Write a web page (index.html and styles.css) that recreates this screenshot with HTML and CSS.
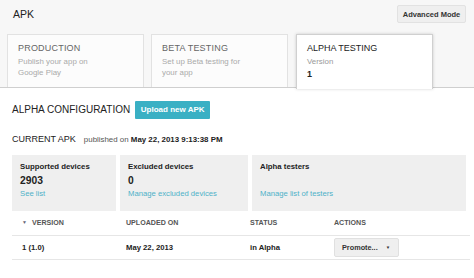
FILE: index.html
```html
<!DOCTYPE html>
<html lang="en">
<head>
    <meta charset="UTF-8">
    <title>APK</title>
    <link rel="stylesheet" href="styles.css">
</head>
<body>
    <div class="top">
        <div class="header">
            <h1>APK</h1>
            <button class="btn">Advanced Mode</button>
        </div>

        <!-- tracks -->
        <div class="tabs">
            <div class="tab">
                <h2>PRODUCTION</h2>
                <p>Publish your app on Google Play</p>
            </div>
            <div class="tab">
                <h2>BETA TESTING</h2>
                <p>Set up Beta testing for your app</p>
            </div>
            <div class="tab active">
                <h2>ALPHA TESTING</h2>
                <p>Version</p>
                <div class="version">1</div>
            </div>
        </div>
    </div>

    <div class="panel">
        <div class="config">
            <h3>ALPHA CONFIGURATION</h3>
            <button class="upload">Upload new APK</button>
        </div>

        <div class="current">
            <h3>CURRENT APK</h3>
            <span class="published">published on <b>May 22, 2013 9:13:38 PM</b></span>
        </div>

        <div class="stats">
            <div class="stat">
                <h4>Supported devices</h4>
                <div class="num">2903</div>
                <a href="#">See list</a>
            </div>
            <div class="stat">
                <h4>Excluded devices</h4>
                <div class="num">0</div>
                <a href="#">Manage excluded devices</a>
            </div>
            <div class="stat wide">
                <h4>Alpha testers</h4>
                <div class="num">&nbsp;</div>
                <a href="#">Manage list of testers</a>
            </div>
        </div>

        <table class="apks">
            <thead>
                <tr>
                    <th class="c-ver"><span class="arrow">&#9660;</span>VERSION</th>
                    <th class="c-up">UPLOADED ON</th>
                    <th class="c-st">STATUS</th>
                    <th>ACTIONS</th>
                </tr>
            </thead>
            <tbody>
                <tr>
                    <td class="c-ver">1 (1.0)</td>
                    <td>May 22, 2013</td>
                    <td>in Alpha</td>
                    <td><button class="promote">Promote... <span class="caret">&#9660;</span></button></td>
                </tr>
            </tbody>
        </table>
    </div>
</body>
</html>
```

FILE: styles.css
```css
* {
    box-sizing: border-box;
    margin: 0;
    padding: 0;
}

body {
    font-family: 'Liberation Sans', Arial, sans-serif;
    background: #fff;
    color: #222;
    width: 474px;
    overflow: hidden;
}

.top {
    background: #f7f7f7;
}

.header {
    display: flex;
    justify-content: space-between;
    align-items: flex-start;
    height: 34px;
    padding: 5px 8px 0 13px;
}

.header h1 {
    font-size: 10.5px;
    font-weight: normal;
    margin-top: 3px;
}

.btn {
    font-family: inherit;
    font-size: 7.5px;
    font-weight: bold;
    color: #333;
    background: #efefef;
    border: 1px solid #e2e2e2;
    border-radius: 2px;
    height: 18px;
    width: 69px;
    padding: 0;
}

/* tabs */
.tabs {
    display: flex;
    gap: 7px;
    padding-left: 7px;
    border-bottom: 1px solid #cfcfcf;
    height: 54px;
}

.tab {
    width: 137px;
    height: 53px;
    background: #fcfcfc;
    border: 1px solid #e2e2e2;
    border-bottom: none;
    padding: 8px 10px 0;
}

.tab h2 {
    font-size: 9px;
    font-weight: normal;
    color: #666;
    letter-spacing: 0.2px;
    line-height: 11px;
}

.tab p {
    font-size: 7.9px;
    color: #aaa;
    line-height: 11px;
    margin-top: 2px;
    width: 90px;
}

.tab.active {
    background: #fff;
    height: 55px;
    border-color: #d0d0d0;
    box-shadow: 0 0 3px rgba(0,0,0,0.18);
    position: relative;
    margin-left: 1px;
}

.tab.active h2 {
    color: #222;
    letter-spacing: 0;
}

.tab.active p {
    color: #999;
}

.version {
    font-size: 9px;
    font-weight: bold;
    margin-top: 2px;
}

/* panel */
.panel {
    padding: 0 8px 0 12px;
}

.config {
    display: flex;
    align-items: center;
    gap: 5px;
    height: 40px;
    padding-top: 3px;
}

.config h3 {
    font-size: 10px;
    font-weight: normal;
}

.current h3 {
    font-size: 9px;
    font-weight: normal;
}

.upload {
    font-family: inherit;
    font-size: 8px;
    font-weight: bold;
    color: #fff;
    background: #3ab0c4;
    border: none;
    border-radius: 1px;
    height: 18px;
    width: 75px;
    padding: 0;
}

.current {
    display: flex;
    align-items: baseline;
    gap: 8px;
    height: 27px;
    padding-top: 6px;
}

.published {
    font-size: 7.9px;
    color: #555;
}

.published b {
    color: #222;
}

.stats {
    display: flex;
    gap: 4px;
    height: 56px;
}

.stat {
    width: 104px;
    background: #efefef;
    padding: 7px 8px 0;
}

.stat:nth-child(2) {
    width: 128px;
}

.stat.wide {
    flex: 1;
}

.stat h4 {
    font-size: 7.8px;
    font-weight: bold;
    color: #222;
    line-height: 10px;
}

.stat .num {
    font-size: 10.3px;
    font-weight: bold;
    line-height: 14px;
    margin-top: 2px;
}

.stat a {
    display: block;
    font-size: 7.7px;
    line-height: 11px;
    color: #4eb1c8;
    text-decoration: none;
}

/* apk table */
.apks {
    width: 458px;
    border-collapse: collapse;
    font-size: 7.7px;
}

.apks th {
    text-align: left;
    font-size: 7.1px;
    font-weight: bold;
    color: #555;
    height: 24px;
    padding-top: 1px;
    border-bottom: 1px solid #e6e6e6;
}

.apks td {
    font-weight: bold;
    color: #222;
    height: 24px;
    border-bottom: 1px solid #e6e6e6;
}

.apks .c-ver {
    width: 114px;
    padding-left: 10px;
}

.apks .c-up {
    width: 124px;
}

.apks .c-st {
    width: 84px;
}

.arrow {
    font-size: 5px;
    color: #667;
    margin-right: 5px;
    vertical-align: 1px;
}

.promote {
    font-family: inherit;
    font-size: 7.3px;
    font-weight: bold;
    color: #333;
    background: #efefef;
    border: 1px solid #e0e0e0;
    border-radius: 2px;
    height: 19px;
    width: 65px;
    text-align: left;
    padding-left: 7px;
    white-space: nowrap;
}

.caret {
    font-size: 4.5px;
    margin-left: 6px;
    vertical-align: 1px;
}
```
